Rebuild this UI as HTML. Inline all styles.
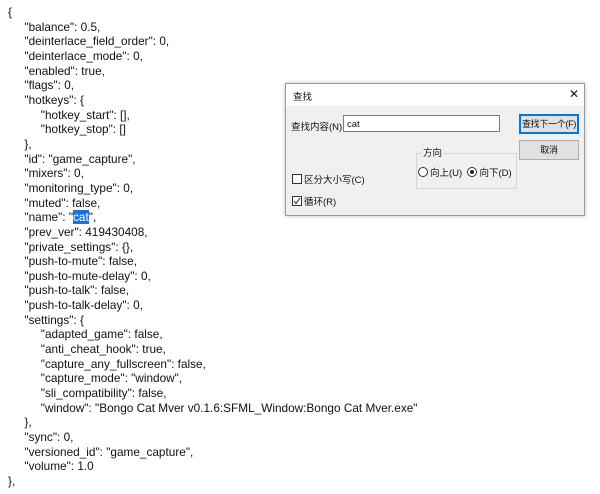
<!DOCTYPE html>
<html><head><meta charset="utf-8"><style>
body{margin:0;width:600px;height:494px;background:#fff;position:relative;overflow:hidden;font-family:"Liberation Sans","Noto Sans CJK SC",sans-serif;color:#111}
.code{position:absolute;left:8px;top:5px;font-size:11.8px;line-height:14.66px;white-space:pre}
.hl{background:#1a73d9;color:#fff}
.dlg{position:absolute;left:285px;top:83px;width:298px;height:131px;background:#f0f0f0;border:1px solid #9a9a9a;box-shadow:0 0 4px rgba(0,0,0,.25);font-size:9.5px}
.tb{position:absolute;left:0;top:0;width:298px;height:22px;background:#fff}
.a{position:absolute;white-space:nowrap}
.btn{position:absolute;left:233px;width:58px;height:18px;background:#e1e1e1;border:1px solid #adadad;text-align:center;line-height:18px;white-space:nowrap;font-size:9px;letter-spacing:-0.3px}
.cb{display:inline-block;width:8px;height:8px;border:1px solid #333;background:#fff;vertical-align:-1px;margin-right:2px;position:relative}
.rd{display:inline-block;width:8px;height:8px;border:1px solid #333;border-radius:50%;background:#fff;vertical-align:-1px;margin-right:2px;position:relative}
</style></head><body>
<div class="code">{
     "balance": 0.5,
     "deinterlace_field_order": 0,
     "deinterlace_mode": 0,
     "enabled": true,
     "flags": 0,
     "hotkeys": {
          "hotkey_start": [],
          "hotkey_stop": []
     },
     "id": "game_capture",
     "mixers": 0,
     "monitoring_type": 0,
     "muted": false,
     "name": "<span class="hl">cat</span>",
     "prev_ver": 419430408,
     "private_settings": {},
     "push-to-mute": false,
     "push-to-mute-delay": 0,
     "push-to-talk": false,
     "push-to-talk-delay": 0,
     "settings": {
          "adapted_game": false,
          "anti_cheat_hook": true,
          "capture_any_fullscreen": false,
          "capture_mode": "window",
          "sli_compatibility": false,
          "window": "Bongo Cat Mver v0.1.6:SFML_Window:Bongo Cat Mver.exe"
     },
     "sync": 0,
     "versioned_id": "game_capture",
     "volume": 1.0
},</div>
<div class="dlg">
 <div class="tb"></div>
 <div class="a" style="left:7px;top:5px">查找</div>
 <div class="a" style="left:283px;top:3px;font-size:12px">✕</div>
 <div class="a" style="left:5px;top:35px">查找内容(N):</div>
 <div class="a" style="left:57px;top:31px;height:17px;background:#fff;border:1px solid #7a7a7a;line-height:17px;padding-left:3px;box-sizing:border-box;width:157px">cat</div>
 <div class="btn" style="top:30px;border:1px solid #0078d7;box-shadow:inset 0 0 0 1px #0078d7">查找下一个(F)</div>
 <div class="btn" style="top:56px">取消</div>
 <div class="a" style="left:130px;top:69px;width:99px;height:34px;border:1px solid #d5d5d5"></div>
 <div class="a" style="left:135px;top:61px;background:#f0f0f0;padding:0 2px">方向</div>
 <div class="a" style="left:132px;top:81px"><span class="rd"></span>向上(U) &nbsp;<span class="rd"><span style="position:absolute;left:2px;top:2px;width:4px;height:4px;border-radius:50%;background:#222"></span></span>向下(D)</div>
 <div class="a" style="left:6px;top:88px"><span class="cb"></span>区分大小写(C)</div>
 <div class="a" style="left:6px;top:110px"><span class="cb"><svg width="8" height="8" style="position:absolute;left:0;top:0"><path d="M1 4 L3 6.5 L7 1" stroke="#222" stroke-width="1" fill="none"/></svg></span>循环(R)</div>
</div>
</body></html>
